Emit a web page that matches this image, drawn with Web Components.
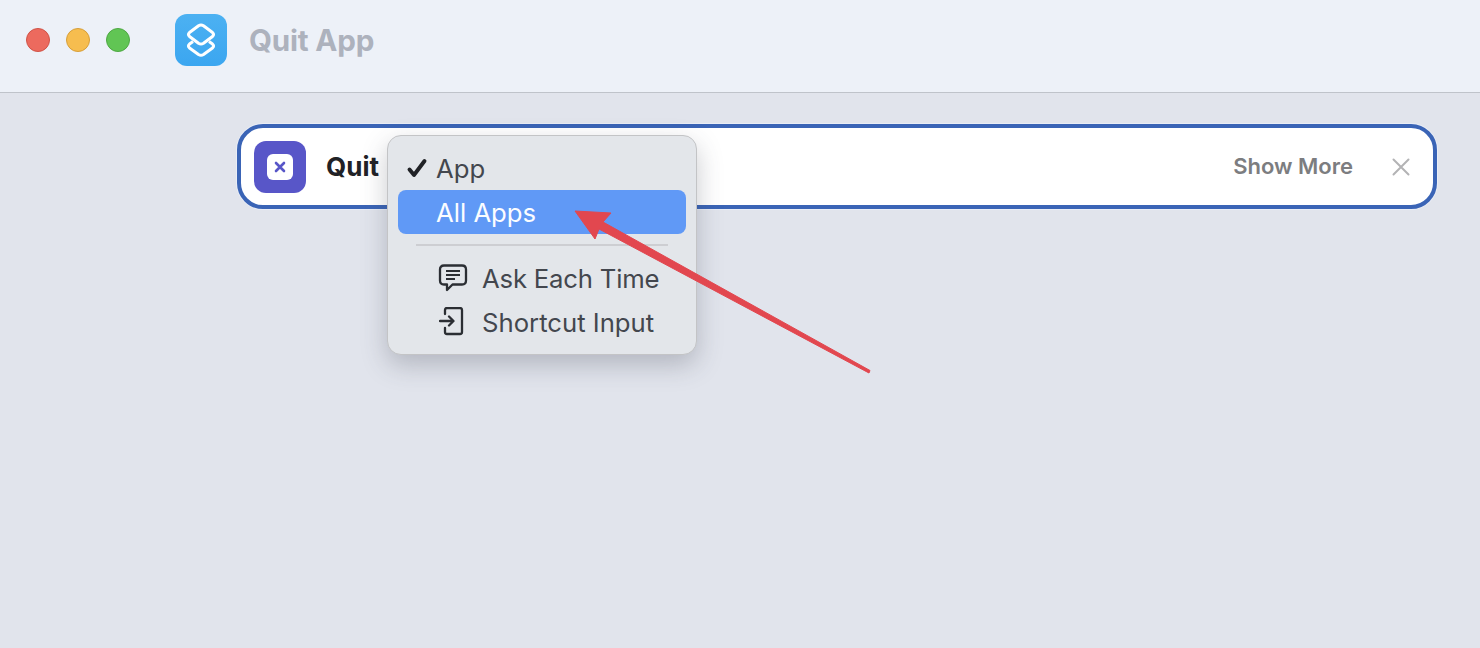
<!DOCTYPE html>
<html>
<head>
<meta charset="utf-8">
<title>Quit App</title>
<style>
  html, body { margin: 0; height: 100%; overflow: hidden; background: #e1e4ec; }
  body { font-family: "Inter", "Liberation Sans", sans-serif; }
</style>
</head>
<body>
<shortcut-window></shortcut-window>

<script>
// traffic lights, app icon and title
class TitleBar extends HTMLElement {
  constructor() {
    super();
    this.attachShadow({ mode: 'open' }).innerHTML = `
      <style>
        :host {
          display: flex;
          align-items: center;
          height: 80px;
          padding: 0 0 12px 26px;
          background: #edf1f8;
          border-bottom: 1px solid #bfc3ca;
        }
        .lights { display: flex; gap: 16px; }
        .lights span { width: 24px; height: 24px; border-radius: 50%; box-sizing: border-box; }
        .red { background: #ec6a5e; border: 1px solid #d05347; }
        .yellow { background: #f6bd4f; border: 1px solid #d79f3a; }
        .green { background: #61c554; border: 1px solid #4ea843; }
        .icon {
          width: 52px; height: 52px;
          margin-left: 45px;
          border-radius: 12px;
          background: linear-gradient(#4cb1f2, #3ba6f0);
          display: flex; align-items: center; justify-content: center;
        }
        svg { display: block; }
        h1 {
          margin: 0 0 0 22px;
          font-size: 29.600px; font-weight: 700; letter-spacing: -0.2px;
          color: #adb2bd;
        }
      </style>
      <div class="lights"><span class="red"></span><span class="yellow"></span><span class="green"></span></div>
      <div class="icon">
        <svg width="30" height="34" viewBox="0 0 30 34" fill="none" stroke="#fff" stroke-width="3" stroke-linejoin="round">
          <path d="M7 18.500 3.500 21q-2 2 0 4l9 6.500q2.500 1.600 5 0l9-6.500q2-2 0-4L23 18.500"/>
          <path d="M12.500 2.700q2.500-1.600 5 0l9 6.800q2 2 0 4l-9 6.800q-2.500 1.600-5 0l-9-6.800q-2-2 0-4z"/>
        </svg>
      </div>
      <h1><slot></slot></h1>
    `;
  }
}

// one row of the popup menu
class MenuRow extends HTMLElement {
  constructor() {
    super();
    this.attachShadow({ mode: 'open' }).innerHTML = `
      <style>
        :host {
          display: flex;
          align-items: center;
          height: 44px;
          border-radius: 8px;
          color: #43474e;
          font-size: 25.700px;
        }
        :host([active]) { background: #6099f6; color: #fbfdff; }
        .lead { display: flex; align-items: center; width: 38px; flex: none; }
        :host([indent]) .lead { width: 84px; padding-left: 40px; box-sizing: border-box; }
      </style>
      <span class="lead"><slot name="lead"></slot></span>
      <span class="label"><slot></slot></span>
    `;
  }
}

// the variable picker floating over the action card
class VariableMenu extends HTMLElement {
  constructor() {
    super();
    this.attachShadow({ mode: 'open' }).innerHTML = `
      <style>
        :host {
          position: absolute;
          left: 387px;
          top: 135px;
          width: 310px;
          height: 220px;
          box-sizing: border-box;
          padding: 10px;
          background: #e3e6ea;
          border: 1px solid #c3c4c6;
          border-radius: 14px;
          box-shadow: 0 10px 26px rgba(60, 64, 80, .28);
        }
        .sep { height: 2px; margin: 10px 18px; background: #cdced2; }
      </style>
      <slot name="top"></slot>
      <div class="sep"></div>
      <slot name="bottom"></slot>
    `;
  }
}

// action row with the blue focus outline
class ActionCard extends HTMLElement {
  constructor() {
    super();
    this.attachShadow({ mode: 'open' }).innerHTML = `
      <style>
        :host {
          display: flex;
          align-items: center;
          height: 85px;
          box-sizing: border-box;
          padding: 0 22px 0 13px;
          background: #fff;
          border: 4px solid #3a64b6;
          border-radius: 26px;
          box-shadow: 0 0 0 1px #e9edf6;
        }
        .icon {
          width: 52px; height: 52px;
          border-radius: 12px;
          background: #5856c8;
          display: flex; align-items: center; justify-content: center;
        }
        .inner {
          width: 26px; height: 26px;
          border-radius: 6px;
          background: #fff;
          display: flex; align-items: center; justify-content: center;
        }
        .name { margin-left: 20px; font-size: 26px; font-weight: 650; color: #212226; }
        .more { margin-left: auto; margin-top: -2px; font-size: 22px; font-weight: 600; color: #7c7d80; }
        .close { margin-left: 38px; }
        svg { display: block; }
      </style>
      <div class="icon">
        <div class="inner">
          <svg width="12" height="12" viewBox="0 0 12 12" stroke="#5856c8" stroke-width="2.600" stroke-linecap="round">
            <path d="M2 2l8 8M10 2l-8 8"/>
          </svg>
        </div>
      </div>
      <span class="name"><slot></slot></span>
      <span class="more">Show More</span>
      <svg class="close" width="20" height="20" viewBox="0 0 20 20" stroke="#b3b3b5" stroke-width="2" stroke-linecap="round">
        <path d="M2.500 2.500l15 15M17.500 2.500l-15 15"/>
      </svg>
    `;
  }
}

// screenshot annotation, lies over everything
class RedArrow extends HTMLElement {
  constructor() {
    super();
    this.attachShadow({ mode: 'open' }).innerHTML = `
      <style>
        :host { position: absolute; left: 0; top: 0; pointer-events: none; }
        svg { display: block; }
      </style>
      <svg width="1480" height="648" viewBox="0 0 1480 648">
        <path d="M575 211 611 213 603 222 870 370.500 869 373 599 229 595 239z" fill="#e2474f" stroke="#e2474f" stroke-width="1" stroke-linejoin="round"/>
      </svg>
    `;
  }
}

class ShortcutWindow extends HTMLElement {
  constructor() {
    super();
    this.attachShadow({ mode: 'open' }).innerHTML = `
      <style>
        :host { display: block; position: relative; width: 1480px; height: 648px; background: #e1e4ec; overflow: hidden; }
        main { padding: 31px 43px 0 237px; }
        svg { display: block; }
        .check { margin-left: 8px; }
        .input { margin-left: 1px; }
        .tight { letter-spacing: -0.2px; }
      </style>
      <title-bar>Quit App</title-bar>
      <main><action-card>Quit</action-card></main>
      <variable-menu>
        <menu-row slot="top">
          <svg class="check" slot="lead" width="22" height="22" viewBox="0 0 22 22" fill="none" stroke="#202226" stroke-width="3.900" stroke-linecap="round" stroke-linejoin="round"><path d="M3.500 12.500l4.500 5.500L18.500 4"/></svg>
          App
        </menu-row>
        <menu-row slot="top" active>All Apps</menu-row>
        <menu-row slot="bottom" indent class="tight">
          <svg slot="lead" width="30" height="30" viewBox="0 0 30 30" fill="none" stroke="#2b2e33" stroke-width="2.300" stroke-linejoin="round"><path d="M6 2.500h18q4 0 4 4v11q0 4-4 4H14.500L9 27v-5.500H6q-4 0-4-4v-11q0-4 4-4z"/><path d="M8 8h14M8 12h14M8 16h9" stroke-width="1.800"/></svg>
          Ask Each Time
        </menu-row>
        <menu-row slot="bottom" indent>
          <svg class="input" slot="lead" width="30" height="30" viewBox="0 0 30 30" fill="none" stroke="#2b2e33" stroke-width="2.300" stroke-linecap="round" stroke-linejoin="round"><path d="M6 7V3q0-2 2-2h13q2 0 2 2v22q0 2-2 2H8q-2 0-2-2v-4"/><path d="M1 14h13M10 9.500l4.500 4.500-4.500 4.500"/></svg>
          Shortcut Input
        </menu-row>
      </variable-menu>
      <red-arrow></red-arrow>
    `;
  }
}

customElements.define('title-bar', TitleBar);
customElements.define('menu-row', MenuRow);
customElements.define('variable-menu', VariableMenu);
customElements.define('action-card', ActionCard);
customElements.define('red-arrow', RedArrow);
customElements.define('shortcut-window', ShortcutWindow);
</script>
</body>
</html>
